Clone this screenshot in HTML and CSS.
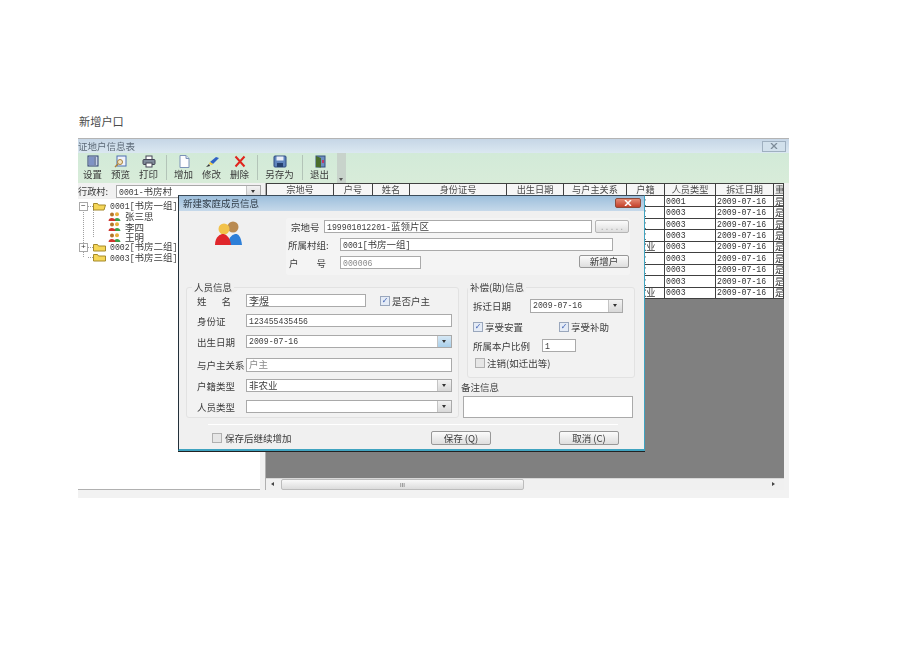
FILE: index.html
```html
<!DOCTYPE html>
<html lang="zh">
<head>
<meta charset="utf-8">
<title>新增户口</title>
<link rel="stylesheet" href="styles.css">
</head>
<body>
<h1 class="doc-title">新增户口</h1>
<div class="app">
  <div class="app-title"><span>证地户信息表</span><button class="app-close"><svg width="10" height="6" viewBox="0 0 10 6"><path d="M2 0l6 6M8 0L2 6" stroke="#7d8c99" stroke-width="1.3" fill="none"/></svg></button></div>
  <div class="toolbar">
    <div class="tool"><svg width="14" height="13" viewBox="0 0 14 13"><rect x="2" y="1" width="10" height="10" fill="#c9d3e6" stroke="#2b3f70"/><rect x="3" y="2" width="5" height="8" fill="#7f93c4"/><path d="M9 2v8" stroke="#2b3f70"/></svg><span>设置</span></div>
    <div class="tool"><svg width="14" height="13" viewBox="0 0 14 13"><rect x="3" y="1" width="9" height="10" fill="#eef3fb" stroke="#4c6fb0"/><circle cx="6" cy="7" r="2.5" fill="#f3e6c2" stroke="#a9803a"/><path d="M4 9l-3 3" stroke="#a9803a" stroke-width="1.4"/></svg><span>预览</span></div>
    <div class="tool"><svg width="14" height="13" viewBox="0 0 14 13"><rect x="4" y="1" width="6" height="4" fill="#fff" stroke="#445"/><rect x="1" y="4.500" width="12" height="5" rx="1" fill="#7f8a99" stroke="#445"/><rect x="4" y="8" width="6" height="4" fill="#fff" stroke="#445"/></svg><span>打印</span></div>
    <i class="tool-sep"></i>
    <div class="tool"><svg width="14" height="13" viewBox="0 0 14 13"><path d="M3 .5h6l3 3v9H3z" fill="#fdfdff" stroke="#7c93b8"/><path d="M9 .5v3h3" fill="#dbe4f2" stroke="#7c93b8"/></svg><span>增加</span></div>
    <div class="tool"><svg width="14" height="13" viewBox="0 0 14 13"><path d="M5 7l6-5 3 1-6 6z" fill="#2f62c4"/><path d="M5 7l3 2-1 1-3-1z" fill="#f2c93a"/><path d="M4 9l-3 3 4-1z" fill="#333"/></svg><span>修改</span></div>
    <div class="tool"><svg width="14" height="13" viewBox="0 0 14 13"><path d="M2.500 1.500l9 10M11.500 1.500l-9 10" stroke="#e0251c" stroke-width="2" fill="none"/></svg><span>删除</span></div>
    <i class="tool-sep"></i>
    <div class="tool tool-wide"><svg width="14" height="13" viewBox="0 0 14 13"><rect x="1" y="1" width="12" height="11" rx="1" fill="#5f84bd" stroke="#2e4a80"/><rect x="3.500" y="1.500" width="7" height="4" fill="#e8eef8"/><rect x="4" y="8" width="6" height="4" fill="#26406f"/></svg><span>另存为</span></div>
    <i class="tool-sep"></i>
    <div class="tool"><svg width="14" height="13" viewBox="0 0 14 13"><rect x="3" y="1" width="9" height="11" fill="#6f8fc0" stroke="#33507f"/><path d="M3 1l5 2v9.500L3 12z" fill="#4a6d2c"/><rect x="9" y="5" width="2" height="3" fill="#c03a6a"/></svg><span>退出</span></div>
    <div class="gripper"><i></i></div>
  </div>
  <div class="main">
    <aside class="left-pane">
      <div class="village-row">
        <label class="village-label">行政村:</label>
        <div class="combo village-combo"><span class="combo-text"><span class="latin">0001-</span>书房村</span><i class="drop"></i></div>
      </div>
      <div class="tree">
        <i class="tree-line tree-line-root"></i>
        <i class="tree-line tree-line-child"></i>
        <div class="node"><i class="exp">−</i><i class="dash"></i><svg class="folder" width="13" height="9" viewBox="0 0 13 9"><path d="M.5 8V1.500h4l1 1.500h7l-1.500 5z" fill="#f5d658" stroke="#a58a2a"/></svg><span><span class="latin">0001[</span>书房一组<span class="latin">]</span></span></div>
        <div class="node node-child"><svg class="person" width="13" height="9" viewBox="0 0 13 9"><circle cx="9" cy="2.200" r="2" fill="#e8b13c"/><path d="M6 9c0-4 6-4 6.500 0z" fill="#3aa04a"/><circle cx="4" cy="2.500" r="2" fill="#b5762a"/><path d="M.5 9c0-4 6.500-4 7 0z" fill="#d0342c"/></svg><span>张三思</span></div>
        <div class="node node-child"><svg class="person" width="13" height="9" viewBox="0 0 13 9"><circle cx="9" cy="2.200" r="2" fill="#e8b13c"/><path d="M6 9c0-4 6-4 6.500 0z" fill="#3aa04a"/><circle cx="4" cy="2.500" r="2" fill="#b5762a"/><path d="M.5 9c0-4 6.500-4 7 0z" fill="#d0342c"/></svg><span>李四</span></div>
        <div class="node node-child"><svg class="person" width="13" height="9" viewBox="0 0 13 9"><circle cx="9" cy="2.200" r="2" fill="#e8b13c"/><path d="M6 9c0-4 6-4 6.500 0z" fill="#3aa04a"/><circle cx="4" cy="2.500" r="2" fill="#b5762a"/><path d="M.5 9c0-4 6.500-4 7 0z" fill="#d0342c"/></svg><span>王明</span></div>
        <div class="node"><i class="exp">+</i><i class="dash"></i><svg class="folder" width="13" height="9" viewBox="0 0 13 9"><path d="M.5 8V1.500h4l1 1.500h7V8z" fill="#f5d658" stroke="#a58a2a"/></svg><span><span class="latin">0002[</span>书房二组<span class="latin">]</span></span></div>
        <div class="node"><i class="exp exp-none"></i><i class="dash"></i><svg class="folder" width="13" height="9" viewBox="0 0 13 9"><path d="M.5 8V1.500h4l1 1.500h7V8z" fill="#f5d658" stroke="#a58a2a"/></svg><span><span class="latin">0003[</span>书房三组<span class="latin">]</span></span></div>
      </div>
    </aside>
    <section class="grid-pane">
      <table class="grid">
        <colgroup><col class="c1"><col class="c2"><col class="c3"><col class="c4"><col class="c5"><col class="c6"><col class="c7"><col class="c8"><col class="c9"><col class="c10"></colgroup>
        <thead><tr><th>宗地号</th><th>户号</th><th>姓名</th><th>身份证号</th><th>出生日期</th><th>与户主关系</th><th>户籍</th><th>人员类型</th><th>拆迁日期</th><th>重</th></tr></thead>
        <tbody>
          <tr><td></td><td></td><td></td><td></td><td></td><td></td><td>农业</td><td class="latin">0001</td><td class="latin">2009-07-16</td><td>是</td></tr>
          <tr><td></td><td></td><td></td><td></td><td></td><td></td><td>农业</td><td class="latin">0003</td><td class="latin">2009-07-16</td><td>是</td></tr>
          <tr><td></td><td></td><td></td><td></td><td></td><td></td><td>农业</td><td class="latin">0003</td><td class="latin">2009-07-16</td><td>是</td></tr>
          <tr><td></td><td></td><td></td><td></td><td></td><td></td><td>农业</td><td class="latin">0003</td><td class="latin">2009-07-16</td><td>是</td></tr>
          <tr><td></td><td></td><td></td><td></td><td></td><td></td><td>非农业</td><td class="latin">0003</td><td class="latin">2009-07-16</td><td>是</td></tr>
          <tr><td></td><td></td><td></td><td></td><td></td><td></td><td>农业</td><td class="latin">0003</td><td class="latin">2009-07-16</td><td>是</td></tr>
          <tr><td></td><td></td><td></td><td></td><td></td><td></td><td>农业</td><td class="latin">0003</td><td class="latin">2009-07-16</td><td>是</td></tr>
          <tr><td></td><td></td><td></td><td></td><td></td><td></td><td>农业</td><td class="latin">0003</td><td class="latin">2009-07-16</td><td>是</td></tr>
          <tr><td></td><td></td><td></td><td></td><td></td><td></td><td>非农业</td><td class="latin">0003</td><td class="latin">2009-07-16</td><td>是</td></tr>
        </tbody>
      </table>
      <div class="hscroll"><i class="arrow-left"></i><div class="thumb"><span>III</span></div><i class="arrow-right"></i></div>
    </section>
  </div>
  <div class="status"></div>

  <div class="dialog">
    <div class="dialog-title"><span>新建家庭成员信息</span><button class="dialog-close"><svg width="10" height="6" viewBox="0 0 10 6"><path d="M2 0l6 6M8 0L2 6" stroke="#fff" stroke-width="1.500" fill="none"/></svg></button></div>
    <div class="top-section">
      <svg class="avatar" width="27" height="24" viewBox="0 0 27 24"><circle cx="18" cy="6" r="5.500" fill="#b98b52"/><circle cx="9" cy="8" r="5.500" fill="#f2c24a"/><path d="M13 24c0-9 6-11 8-11s5 2 6 11z" fill="#2d7fd8"/><path d="M0 24c0-9 6-11 8-11s7 2 8 11z" fill="#e0262b"/></svg>
      <div class="house-group">
        <div class="house-row">
          <label class="lb-house">宗地号</label>
          <div class="input house-input"><span class="latin">199901012201-</span>蓝领片区</div>
          <button class="btn btn-dots"><span class="latin">.....</span></button>
        </div>
        <div class="village-group-row">
          <label class="lb-village">所属村组:</label>
          <div class="input village-input"><span class="latin">0001[</span>书房一组<span class="latin">]</span></div>
        </div>
        <div class="hh-row">
          <label class="lb-hh">户号</label>
          <div class="input hh-input"><span class="latin muted">000006</span></div>
          <button class="btn btn-new">新增户</button>
        </div>
      </div>
    </div>
    <div class="mid-section">
      <div class="group person-group">
        <span class="legend">人员信息</span>
        <div class="f-row">
          <label class="lb lb-name">姓名</label>
          <div class="input name-input">李煜</div>
          <span class="check owner-check"><i class="box on">✓</i>是否户主</span>
        </div>
        <div class="f-row r-id">
          <label class="lb">身份证</label>
          <div class="input wide-input"><span class="latin">123455435456</span></div>
        </div>
        <div class="f-row r-birth">
          <label class="lb">出生日期</label>
          <div class="combo wide-input"><span class="combo-text latin">2009-07-16</span><i class="drop drop-blue"></i></div>
        </div>
        <div class="f-row r-rel">
          <label class="lb">与户主关系</label>
          <div class="input wide-input tall muted">户主</div>
        </div>
        <div class="f-row r-hk">
          <label class="lb">户籍类型</label>
          <div class="combo wide-input"><span class="combo-text">非农业</span><i class="drop"></i></div>
        </div>
        <div class="f-row r-type">
          <label class="lb">人员类型</label>
          <div class="combo wide-input"><span class="combo-text"></span><i class="drop"></i></div>
        </div>
      </div>
      <div class="right-col">
        <div class="group comp-group">
          <span class="legend legend-comp">补偿(助)信息</span>
          <div class="f-row">
            <label class="lb lb-move">拆迁日期</label>
            <div class="combo move-combo"><span class="combo-text latin">2009-07-16</span><i class="drop"></i></div>
          </div>
          <div class="f-row r-enjoy">
            <span class="check enjoy-a"><i class="box on">✓</i>享受安置</span>
            <span class="check"><i class="box on">✓</i>享受补助</span>
          </div>
          <div class="f-row r-ratio">
            <label class="lb lb-ratio">所属本户比例</label>
            <div class="input ratio-input"><span class="latin">1</span></div>
          </div>
          <div class="f-row r-cancel">
            <span class="check"><i class="box"></i>注销(如迁出等)</span>
          </div>
        </div>
        <div class="remark-label">备注信息</div>
        <div class="input remark"></div>
      </div>
    </div>
    <div class="divider"></div>
    <div class="footer">
      <span class="check keep-check"><i class="box"></i>保存后继续增加</span>
      <button class="btn btn-foot">保存 (Q)</button>
      <button class="btn btn-foot btn-cancel">取消 (C)</button>
    </div>
  </div>
</div>
</body>
</html>
```
FILE: styles.css
```css
* { box-sizing: border-box; }
html, body { margin: 0; padding: 0; }
body {
  width: 920px;
  height: 651px;
  overflow: hidden;
  background: #fff;
  font-family: "Noto Sans CJK SC", "Noto Sans", sans-serif;
  font-size: 9.500px;
  color: #3c3c3c;
}
i { font-style: normal; }
button { font: inherit; color: inherit; padding: 0; margin: 0; }
.latin { font-family: "Liberation Mono", "Noto Sans CJK SC", monospace; font-size: 8.200px; }
.muted { color: #8a8a8a; }

.doc-title {
  margin: 0;
  padding: 115px 0 0 79px;
  height: 138px;
  font-weight: 400;
  font-size: 11.200px;
  line-height: 13px;
  color: #4a4a4a;
}

.app {
  position: relative;
  width: 711px;
  height: 360px;
  margin-left: 78px;
  display: flex;
  flex-direction: column;
  background: #f1f1f1;
  filter: blur(0.35px);
}
.app-title {
  height: 15px;
  display: flex;
  align-items: center;
  justify-content: space-between;
  padding-right: 3px;
  border-top: 1px solid #b4b4b4;
  background: linear-gradient(#c6d6e6, #dbe8f1);
  color: #5d6a78;
  font-size: 9.500px;
  line-height: 13px;
  overflow: hidden;
}
.app-close {
  width: 24px;
  height: 11px;
  border: 1px solid #9fb0c0;
  background: #d2e1ec;
  display: flex;
  align-items: center;
  justify-content: center;
}

.toolbar {
  height: 30px;
  display: flex;
  align-items: stretch;
  background: linear-gradient(#d2ead8, #d8ecd9);
}
.tool {
  width: 28px;
  padding-top: 2px;
  display: flex;
  flex-direction: column;
  align-items: center;
  font-size: 9.500px;
  line-height: 13px;
  color: #3a3a3a;
}
.tool:first-child { margin-left: .5px; }
.tool-wide { width: 38px; }
.tool-sep {
  width: 1px;
  margin: 2px 3px 3px;
  background: #b3c4b8;
}
.gripper {
  width: 9px;
  margin-left: 3px;
  background: #c8d3cb;
  position: relative;
}
.gripper i {
  position: absolute;
  left: 2px;
  bottom: 2px;
  border: 2.500px solid transparent;
  border-top: 3px solid #555;
  border-bottom: 0;
}

.main {
  height: 307px;
  display: flex;
}
.left-pane {
  width: 184px;
  margin-right: 3px;
  display: flex;
  flex-direction: column;
}
.village-row {
  height: 14px;
  margin-top: 1px;
  display: flex;
  align-items: center;
}
.village-label { width: 38px; white-space: nowrap; line-height: 12px; font-size: 9.200px; }
.village-combo { width: 145px; height: 13px; }

.combo {
  display: flex;
  background: #fff;
  border: 1px solid #a9a9a9;
  height: 13px;
}
.combo-text {
  flex: 1;
  padding-left: 2px;
  line-height: 11px;
  white-space: nowrap;
  overflow: hidden;
}
.drop {
  width: 14px;
  background: linear-gradient(#f3f3f3, #d8d8d8);
  border-left: 1px solid #c4c4c4;
  position: relative;
}
.drop::after {
  content: "";
  position: absolute;
  left: 4px;
  top: 4px;
  border: 2.500px solid transparent;
  border-top: 3px solid #333;
  border-bottom: 0;
}
.drop-blue { background: linear-gradient(#d6e8f5, #a9cfea); }

.tree {
  position: relative;
  flex: 1;
  margin-top: 1px;
  margin-right: 2px;
  padding-top: 2px;
  background: #fff;
  border-bottom: 1px solid #b0b0b0;
  overflow: hidden;
}
.tree-line { position: absolute; border-left: 1px dotted #a0a0a0; }
.tree-line-root { left: 5px; top: 6px; height: 52px; }
.tree-line-child { left: 15px; top: 10px; height: 28px; }
.node {
  position: relative;
  height: 10.300px;
  display: flex;
  align-items: center;
  padding-left: 1px;
  white-space: nowrap;
  line-height: 10px;
  font-size: 9.500px;
}
.node-child { padding-left: 16px; }
.node-child::before {
  content: "";
  width: 15px;
  margin-right: 0;
  border-top: 1px dotted #a0a0a0;
  display: none;
}
.exp {
  width: 9px;
  height: 9px;
  border: 1px solid #a8a8a8;
  background: #fff;
  color: #333;
  font-size: 8px;
  line-height: 6px;
  text-align: center;
  font-family: "Liberation Mono", monospace;
  position: relative;
}
.exp-none { border: 0; background: transparent; }
.dash { width: 5px; border-top: 1px dotted #a0a0a0; }
.folder { margin-right: 4px; flex: none; }
.person { margin: 0 4px 0 14px; flex: none; }

.grid-pane {
  width: 519px;
  display: flex;
  flex-direction: column;
  background: #808080;
  border-left: 1px solid #b0b0b0;
  overflow: hidden;
}
.grid {
  width: 517px;
  table-layout: fixed;
  border-collapse: collapse;
  background: #fff;
  font-size: 9.200px;
}
.c1 { width: 67px; } .c2 { width: 39px; } .c3 { width: 37px; } .c4 { width: 97px; }
.c5 { width: 57px; } .c6 { width: 63px; } .c7 { width: 38px; } .c8 { width: 51px; }
.c9 { width: 58px; } .c10 { width: 10px; }
.grid th, .grid td {
  border: 1px solid #404040;
  padding: 0 1px;
  overflow: hidden;
  white-space: nowrap;
  line-height: 9px;
}
.grid th {
  height: 12px;
  font-weight: 400;
  background: #f6f6f6;
  color: #4a4a4a;
}
.grid td { height: 11.450px; color: #333; }
.hscroll {
  height: 12px;
  margin-top: auto;
  display: flex;
  align-items: stretch;
  background: #f0f0f0;
  border-top: 1px solid #d8d8d8;
  position: relative;
}
.arrow-left, .arrow-right { width: 15px; position: relative; }
.arrow-left::after, .arrow-right::after {
  content: "";
  position: absolute;
  top: 3px;
  left: 5px;
  border: 2.500px solid transparent;
}
.arrow-left::after { border-right: 3px solid #444; border-left: 0; }
.arrow-right { margin-left: auto; margin-right: 2px; }
.arrow-right::after { border-left: 3px solid #444; border-right: 0; }
.thumb {
  width: 243px;
  background: linear-gradient(#f9f9f9, #dcdcdc);
  border: 1px solid #bcbcbc;
  border-radius: 2px;
  display: flex;
  align-items: center;
  justify-content: center;
  font-size: 6px;
  line-height: 8px;
  color: #666;
  font-family: "Liberation Sans", sans-serif;
}
.status { height: 8px; background: #f2f2f2; }

.dialog {
  position: absolute;
  left: 100px;
  top: 57px;
  width: 467px;
  height: 256px;
  background: #f0f0f0;
  border-left: 1px solid #23303a;
  border-top: 1px solid #3c4c5a;
  border-right: 1px solid #3fa3c0;
  border-bottom: 2px solid #3fa3c0;
  box-shadow: 0 1px 0 #222;
  font-size: 9.500px;
}
.dialog-title {
  height: 15px;
  display: flex;
  align-items: center;
  justify-content: space-between;
  padding: 0 3px 0 4px;
  background: linear-gradient(#9dbfdc, #c6d9ea);
  color: #2f3b46;
  line-height: 13px;
}
.dialog-close {
  width: 26px;
  height: 10px;
  margin-top: -1px;
  border: 1px solid #8e4a3a;
  border-radius: 2px;
  background: linear-gradient(#e48a74, #c4402a);
  display: flex;
  align-items: center;
  justify-content: center;
}

.top-section {
  display: flex;
  margin-top: 7px;
  padding-left: 36px;
}
.avatar { margin-top: 3px; flex: none; }
.house-group {
  width: 344px;
  height: 57px;
  margin-left: 44px;
  padding-top: 2px;
  background: #f4f4f4;
  border-radius: 3px;
  display: flex;
  flex-direction: column;
  gap: 5px;
}
.house-row, .village-group-row, .hh-row { display: flex; align-items: center; height: 13px; }
.house-row { padding-left: 5px; }
.village-group-row { padding-left: 2px; }
.hh-row { padding-left: 3px; }
.lb-house { width: 33px; white-space: nowrap; line-height: 12px; }
.lb-village { width: 52px; white-space: nowrap; line-height: 12px; }
.lb-hh { width: 51px; letter-spacing: 18px; white-space: nowrap; line-height: 12px; }

.input {
  height: 13px;
  background: #fff;
  border: 1px solid #aaa;
  padding-left: 2px;
  line-height: 11px;
  white-space: nowrap;
  overflow: hidden;
}
.house-input { width: 268px; }
.village-input { width: 273px; }
.hh-input { width: 81px; }
.btn {
  background: linear-gradient(#fbfbfb, #dedede);
  border: 1px solid #989898;
  border-radius: 2px;
  line-height: 11px;
  text-align: center;
  white-space: nowrap;
}
.btn-dots { width: 34px; height: 13px; margin-left: 3px; color: #aaa; border-color: #b5b5b5; }
.btn-new { width: 50px; height: 13px; margin: -2px 1px 0 auto; }

.mid-section {
  display: flex;
  gap: 2px;
  margin-top: 12px;
  padding-left: 7px;
}
.group {
  position: relative;
  border: 1px solid #e2e2e2;
  border-radius: 3px;
  background: #f2f2f2;
}
.legend {
  position: absolute;
  left: 5px;
  top: -7px;
  padding: 0 2px;
  background: #f0f0f0;
  line-height: 12px;
  white-space: nowrap;
}
.legend-comp { left: 0; }
.person-group { width: 273px; height: 131px; padding: 6px 0 0 10px; }
.right-col { width: 175px; }
.comp-group { width: 168px; height: 91px; margin-left: 6px; padding: 11px 0 0 5px; }
.f-row { display: flex; align-items: center; min-height: 13px; white-space: nowrap; }
.lb { width: 49px; line-height: 12px; white-space: nowrap; flex: none; }
.lb-name { letter-spacing: 15px; overflow: hidden; }
.name-input { width: 120px; font-size: 10px; }
.wide-input { width: 206px; }
.tall { height: 14px; }
.r-id { margin-top: 7px; }
.r-birth { margin-top: 8px; }
.r-rel { margin-top: 10px; }
.r-hk { margin-top: 7px; }
.r-type { margin-top: 8px; }
.check { display: inline-flex; align-items: center; line-height: 12px; white-space: nowrap; }
.box {
  width: 10px;
  height: 10px;
  margin-right: 2px;
  flex: none;
  background: #e6e6e6;
  border: 1px solid #b0b0b0;
  color: #3f62b5;
  font-family: "DejaVu Sans", sans-serif;
  font-size: 8px;
  line-height: 8px;
  text-align: center;
}
.box.on { background: #e4ebf6; border-color: #9aa7bc; }
.owner-check { margin-left: 14px; }
.lb-move { width: 57px; }
.move-combo { width: 93px; height: 14px; }
.r-enjoy { margin-top: 9px; min-height: 10px; height: 10px; }
.enjoy-a { width: 86px; }
.r-ratio { margin-top: 7px; }
.lb-ratio { width: 69px; }
.ratio-input { width: 34px; }
.r-cancel { margin: 6px 0 0 2px; min-height: 10px; height: 10px; }
.remark-label { margin-top: 3px; line-height: 12px; height: 15px; }
.remark { width: 170px; height: 22px; margin-left: 2px; }
.divider { width: 410px; height: 1px; margin: 6px 0 0 29px; background: #fff; }
.footer {
  display: flex;
  align-items: center;
  height: 14px;
  margin-top: 6px;
  padding-left: 33px;
}
.keep-check { width: 219px; }
.keep-check .box { margin-right: 3px; }
.btn-foot { width: 60px; height: 14px; line-height: 12px; }
.btn-cancel { margin-left: 68px; }
```
